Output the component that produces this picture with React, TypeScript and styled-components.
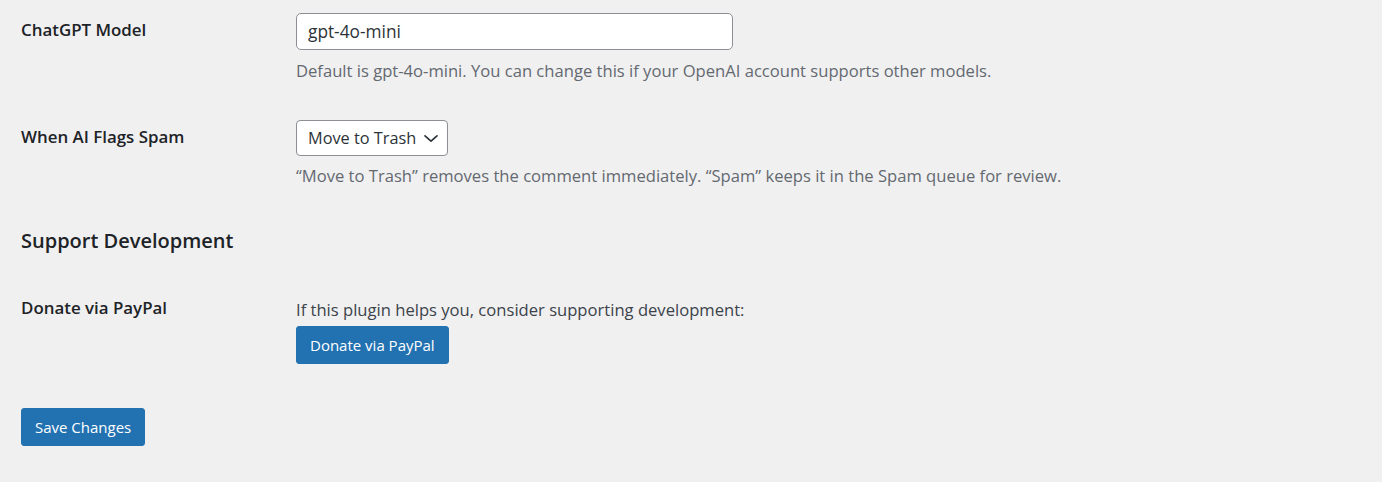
import React from "react";
import styled, { createGlobalStyle } from "styled-components";

const GlobalStyle = createGlobalStyle`
  html, body {
    margin: 0;
    padding: 0;
    background: #f0f0f1;
  }
  body {
    font-family: "Open Sans", "Noto Sans", "Liberation Sans", sans-serif;
    color: #1d2327;
    font-size: 16.6px;
    -webkit-font-smoothing: antialiased;
  }
`;

const Wrap = styled.form`
  padding: 0 21px;
  height: 482px;
  overflow: hidden;
`;

const FormTable = styled.div<{ $offset?: number }>`
  display: flex;
  flex-direction: column;
  margin-top: ${(p) => p.$offset ?? 0}px;
`;

const Row = styled.div`
  display: grid;
  grid-template-columns: 275px 1fr;
  align-items: start;
  padding: 19px 0;
`;

const Label = styled.label<{ $top?: number }>`
  font-weight: 600;
  font-size: 16.9px;
  line-height: 22px;
  color: #1d2327;
  margin-top: ${(p) => p.$top ?? 0}px;
`;

const Field = styled.div`
  display: flex;
  flex-direction: column;
  align-items: flex-start;
`;

const TextInput = styled.input`
  box-sizing: border-box;
  width: 437px;
  height: 37px;
  padding: 0 11px;
  border: 1px solid #8c8f94;
  border-radius: 5px;
  background: #fff;
  font: inherit;
  font-size: 17.3px;
  color: #2c3338;
  outline: none;
`;

const SelectBox = styled.div`
  box-sizing: border-box;
  width: 152px;
  height: 36px;
  padding: 0 8px 0 11px;
  border: 1px solid #8c8f94;
  border-radius: 4px;
  background: #fff;
  display: flex;
  align-items: center;
  justify-content: space-between;
  font-size: 16.3px;
  color: #2c3338;
`;

const Description = styled.p<{ $gap: number }>`
  margin: ${(p) => p.$gap}px 0 0;
  font-size: 16.6px;
  line-height: 22px;
  color: #646970;
  white-space: nowrap;
`;

const Text = styled.p`
  margin: 0;
  font-size: 16.6px;
  line-height: 22px;
  color: #3c434a;
`;

const Heading = styled.h2`
  margin: 22px 0 26px;
  font-size: 20px;
  line-height: 26px;
  font-weight: 600;
  color: #1d2327;
`;

const PrimaryButton = styled.button<{ $gap?: number }>`
  box-sizing: border-box;
  height: 38px;
  margin-top: ${(p) => p.$gap ?? 0}px;
  padding: 0 13px;
  border: 1px solid #2271b1;
  border-radius: 3px;
  background: #2271b1;
  color: #fff;
  font: inherit;
  font-size: 15px;
  line-height: 36px;
  cursor: pointer;
`;

const Submit = styled.div`
  margin-top: 25px;
`;

const Chevron = () => (
  <svg width="16" height="9" viewBox="0 0 16 9" aria-hidden="true">
    <path d="M2 1.8 L8 7.2 L14 1.8" fill="none" stroke="#2c3338" strokeWidth="1.7" strokeLinecap="round" strokeLinejoin="round" />
  </svg>
);

export default function App() {
  return (
    <>
      <GlobalStyle />
      <Wrap>
        <FormTable $offset={-6}>
          <Row>
            <Label $top={6}>ChatGPT Model</Label>
            <Field>
              <TextInput defaultValue="gpt-4o-mini" />
              <Description $gap={10}>
                Default is gpt-4o-mini. You can change this if your OpenAI account supports other models.
              </Description>
            </Field>
          </Row>
          <Row>
            <Label $top={6}>When AI Flags Spam</Label>
            <Field>
              <SelectBox>
                <span>Move to Trash</span>
                <Chevron />
              </SelectBox>
              <Description $gap={9}>
                “Move to Trash” removes the comment immediately. “Spam” keeps it in the Spam queue for review.
              </Description>
            </Field>
          </Row>
        </FormTable>
        <Heading>Support Development</Heading>
        <FormTable>
          <Row>
            <Label $top={-2}>Donate via PayPal</Label>
            <Field>
              <Text>If this plugin helps you, consider supporting development:</Text>
              <PrimaryButton type="button" $gap={5}>Donate via PayPal</PrimaryButton>
            </Field>
          </Row>
        </FormTable>
        <Submit>
          <PrimaryButton type="button">Save Changes</PrimaryButton>
        </Submit>
      </Wrap>
    </>
  );
}
